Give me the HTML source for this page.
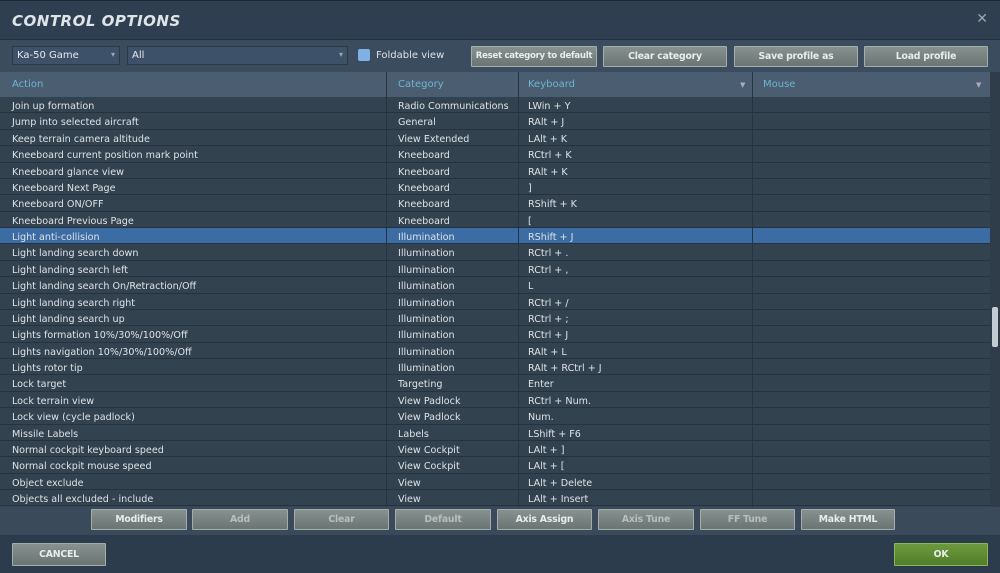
<!DOCTYPE html>
<html><head><meta charset="utf-8"><style>
*{margin:0;padding:0;box-sizing:border-box}
body{width:1000px;height:573px;overflow:hidden;background:#3a4a5b;font-family:"DejaVu Sans","Liberation Sans",sans-serif;position:relative;color:#dde2e7}
.title{position:absolute;left:0;top:0;width:1000px;height:40px;background:#2f3e50;border-top:1px solid #1c2733;border-bottom:1px solid #22303e}
.title h1{position:absolute;left:12px;top:11px;font-size:15px;font-style:italic;font-weight:bold;color:#dfe4e9;letter-spacing:0.5px}
.x{position:absolute;right:12px;top:10px;color:#9aa6b1;font-size:14px}
.bar{position:absolute;top:40px;left:0;width:1000px;height:32px;background:#3b4c5e}
.sel{position:absolute;top:46px;height:19px;background:#3d5169;border:1px solid #2c3a48;font-size:10px;padding:3px 4px;color:#e6eaee}
.sel:after{content:"▾";position:absolute;right:4px;top:3px;font-size:8px;color:#9aa}
.chk{position:absolute;left:358px;top:49px;width:12px;height:12px;background:#7fb0e6;border-radius:2px}
.fl{position:absolute;left:376px;top:50px;font-size:10px}
.btn{position:absolute;height:21px;background:linear-gradient(#87918f,#6a7573);border:1px solid #a4adab;border-radius:1px;font-size:9.3px;font-weight:bold;text-align:center;line-height:19px;color:#e8ecec;white-space:nowrap;overflow:hidden;letter-spacing:-0.2px}
.btn.d{color:#b7bfbe}
.table{position:absolute;left:0;top:72px;width:990px;height:435px;background:#364658}
.hdr{position:absolute;left:0;top:0;width:990px;height:25px;background:#4b5d70;font-size:10px;color:#6db5d6}
.hdr span{position:absolute;top:7px}
.rows{position:absolute;top:25px;left:0;width:990px}
.r{height:16.375px;border-bottom:1px solid #26323f;background:#33424f;position:relative;font-size:9.6px;line-height:15px}
.r span{position:absolute;top:2px}
.r.s{background:#3b6ca4}
.c1{left:12px}.c2{left:398px}.c3{left:528px}
.vl{position:absolute;top:0;width:1px;height:435px;background:#263341}
.sb{position:absolute;left:990px;top:72px;width:10px;height:435px;background:#2f3c4a}
.foot{position:absolute;left:0;top:535px;width:1000px;height:38px;background:#2d3c4d}
</style></head><body>
<div class="title"><h1>CONTROL OPTIONS</h1><div class="x">✕</div></div>
<div class="bar"></div>
<div class="sel" style="left:12px;width:108px">Ka-50 Game</div>
<div class="sel" style="left:127px;width:221px">All</div>
<div class="chk"></div><div class="fl">Foldable view</div>
<div class="btn" style="left:471px;top:46px;width:126px;font-size:8.6px;letter-spacing:-0.3px">Reset category to default</div>
<div class="btn" style="left:603px;top:46px;width:124px">Clear category</div>
<div class="btn" style="left:734px;top:46px;width:124px">Save profile as</div>
<div class="btn" style="left:864px;top:46px;width:124px">Load profile</div>
<div class="table">
<div class="hdr"><span style="left:12px">Action</span><span style="left:398px">Category</span><span style="left:528px">Keyboard</span><span style="left:763px">Mouse</span><span style="left:740px;font-size:7px;color:#aab;top:9px">▼</span><span style="left:976px;font-size:7px;color:#aab;top:9px">▼</span></div>
<div class="rows">
<div class="r"><span class="c1">Join up formation</span><span class="c2">Radio Communications</span><span class="c3">LWin + Y</span></div>
<div class="r"><span class="c1">Jump into selected aircraft</span><span class="c2">General</span><span class="c3">RAlt + J</span></div>
<div class="r"><span class="c1">Keep terrain camera altitude</span><span class="c2">View Extended</span><span class="c3">LAlt + K</span></div>
<div class="r"><span class="c1">Kneeboard current position mark point</span><span class="c2">Kneeboard</span><span class="c3">RCtrl + K</span></div>
<div class="r"><span class="c1">Kneeboard glance view</span><span class="c2">Kneeboard</span><span class="c3">RAlt + K</span></div>
<div class="r"><span class="c1">Kneeboard Next Page</span><span class="c2">Kneeboard</span><span class="c3">]</span></div>
<div class="r"><span class="c1">Kneeboard ON/OFF</span><span class="c2">Kneeboard</span><span class="c3">RShift + K</span></div>
<div class="r"><span class="c1">Kneeboard Previous Page</span><span class="c2">Kneeboard</span><span class="c3">[</span></div>
<div class="r s"><span class="c1">Light anti-collision</span><span class="c2">Illumination</span><span class="c3">RShift + J</span></div>
<div class="r"><span class="c1">Light landing search down</span><span class="c2">Illumination</span><span class="c3">RCtrl + .</span></div>
<div class="r"><span class="c1">Light landing search left</span><span class="c2">Illumination</span><span class="c3">RCtrl + ,</span></div>
<div class="r"><span class="c1">Light landing search On/Retraction/Off</span><span class="c2">Illumination</span><span class="c3">L</span></div>
<div class="r"><span class="c1">Light landing search right</span><span class="c2">Illumination</span><span class="c3">RCtrl + /</span></div>
<div class="r"><span class="c1">Light landing search up</span><span class="c2">Illumination</span><span class="c3">RCtrl + ;</span></div>
<div class="r"><span class="c1">Lights formation 10%/30%/100%/Off</span><span class="c2">Illumination</span><span class="c3">RCtrl + J</span></div>
<div class="r"><span class="c1">Lights navigation 10%/30%/100%/Off</span><span class="c2">Illumination</span><span class="c3">RAlt + L</span></div>
<div class="r"><span class="c1">Lights rotor tip</span><span class="c2">Illumination</span><span class="c3">RAlt + RCtrl + J</span></div>
<div class="r"><span class="c1">Lock target</span><span class="c2">Targeting</span><span class="c3">Enter</span></div>
<div class="r"><span class="c1">Lock terrain view</span><span class="c2">View Padlock</span><span class="c3">RCtrl + Num.</span></div>
<div class="r"><span class="c1">Lock view (cycle padlock)</span><span class="c2">View Padlock</span><span class="c3">Num.</span></div>
<div class="r"><span class="c1">Missile Labels</span><span class="c2">Labels</span><span class="c3">LShift + F6</span></div>
<div class="r"><span class="c1">Normal cockpit keyboard speed</span><span class="c2">View Cockpit</span><span class="c3">LAlt + ]</span></div>
<div class="r"><span class="c1">Normal cockpit mouse speed</span><span class="c2">View Cockpit</span><span class="c3">LAlt + [</span></div>
<div class="r"><span class="c1">Object exclude</span><span class="c2">View</span><span class="c3">LAlt + Delete</span></div>
<div class="r"><span class="c1">Objects all excluded - include</span><span class="c2">View</span><span class="c3">LAlt + Insert</span></div>
</div>
<div class="vl" style="left:386px"></div><div class="vl" style="left:518px"></div><div class="vl" style="left:752px"></div>
</div>
<div class="sb"><div style="position:absolute;left:2px;top:235px;width:6px;height:40px;background:#c4ccd3;border-radius:2px"></div></div>
<div class="btn" style="left:91px;top:509px;width:96px">Modifiers</div>
<div class="btn d" style="left:192px;top:509px;width:96px">Add</div>
<div class="btn d" style="left:294px;top:509px;width:95px">Clear</div>
<div class="btn d" style="left:395px;top:509px;width:96px">Default</div>
<div class="btn" style="left:497px;top:509px;width:95px">Axis Assign</div>
<div class="btn d" style="left:598px;top:509px;width:96px">Axis Tune</div>
<div class="btn d" style="left:700px;top:509px;width:95px">FF Tune</div>
<div class="btn" style="left:801px;top:509px;width:94px">Make HTML</div>
<div class="foot"></div>
<div class="btn" style="left:12px;top:543px;width:94px;height:23px;line-height:21px">CANCEL</div>
<div class="btn" style="left:894px;top:543px;width:94px;height:23px;line-height:21px;background:linear-gradient(#6e9a3e,#527d2a);border-color:#8ab65a">OK</div>
</body></html>
